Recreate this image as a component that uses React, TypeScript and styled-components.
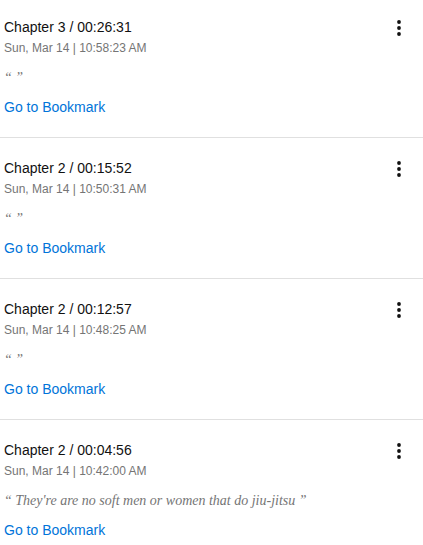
import * as React from 'react';
import styled, { createGlobalStyle } from 'styled-components';

const GlobalStyle = createGlobalStyle`
  body {
    margin: 0;
    background: #fff;
    font-family: "Liberation Sans", Arial, sans-serif;
  }
`;

const bookmarks = [
  { chapter: 3, time: '00:26:31', date: 'Sun, Mar 14 | 10:58:23 AM', note: '' },
  { chapter: 2, time: '00:15:52', date: 'Sun, Mar 14 | 10:50:31 AM', note: '' },
  { chapter: 2, time: '00:12:57', date: 'Sun, Mar 14 | 10:48:25 AM', note: '' },
  {
    chapter: 2,
    time: '00:04:56',
    date: 'Sun, Mar 14 | 10:42:00 AM',
    note: "They're are no soft men or women that do jiu-jitsu",
  },
];

export default function App() {
  return (
    <>
      <GlobalStyle />
      <List>
        {bookmarks.map((b, i) => (
          <Item key={i}>
            <Header>
              <div>
                <Title>
                  Chapter {b.chapter} / {b.time}
                </Title>
                <DateText>{b.date}</DateText>
              </div>
              <MenuButton aria-label="more">
                <svg width="24" height="24" viewBox="0 0 24 24">
                  <circle cx="12" cy="6" r="1.9" fill="#111" />
                  <circle cx="12" cy="12" r="1.9" fill="#111" />
                  <circle cx="12" cy="18" r="1.9" fill="#111" />
                </svg>
              </MenuButton>
            </Header>
            <Quote>
              “ {b.note}
              {b.note ? ' ' : ''}”
            </Quote>
            <Link href="#">Go to Bookmark</Link>
          </Item>
        ))}
      </List>
    </>
  );
}

// list is scrolled slightly, first card starts above the viewport
const List = styled.div`
  display: flex;
  flex-direction: column;
  margin-top: -3px;
`;

const Item = styled.div`
  padding: 20px 4px 0 4px;
  border-bottom: 1px solid #e0e0e0;
  height: 141px;
  box-sizing: border-box;
`;

const Header = styled.div`
  display: flex;
  justify-content: space-between;
  align-items: flex-start;
`;

const Title = styled.div`
  font-size: 14px;
  line-height: 20px;
  color: #111;
`;

const DateText = styled.div`
  margin-top: 1px;
  font-size: 12px;
  line-height: 20px;
  color: #757575;
`;

const MenuButton = styled.button`
  border: 0;
  background: none;
  padding: 0;
  margin-right: 8px;
  margin-top: -1px;
  width: 24px;
  height: 24px;
  display: flex;
`;

const Quote = styled.div`
  font-family: "Liberation Serif", "Times New Roman", serif;
  font-style: italic;
  font-size: 14px;
  color: #757575;
  margin-top: 10px;
  line-height: 20px;
`;

const Link = styled.a`
  display: inline-block;
  margin-top: 9px;
  font-size: 14px;
  line-height: 20px;
  color: #0074d9;
  text-decoration: none;
`;
